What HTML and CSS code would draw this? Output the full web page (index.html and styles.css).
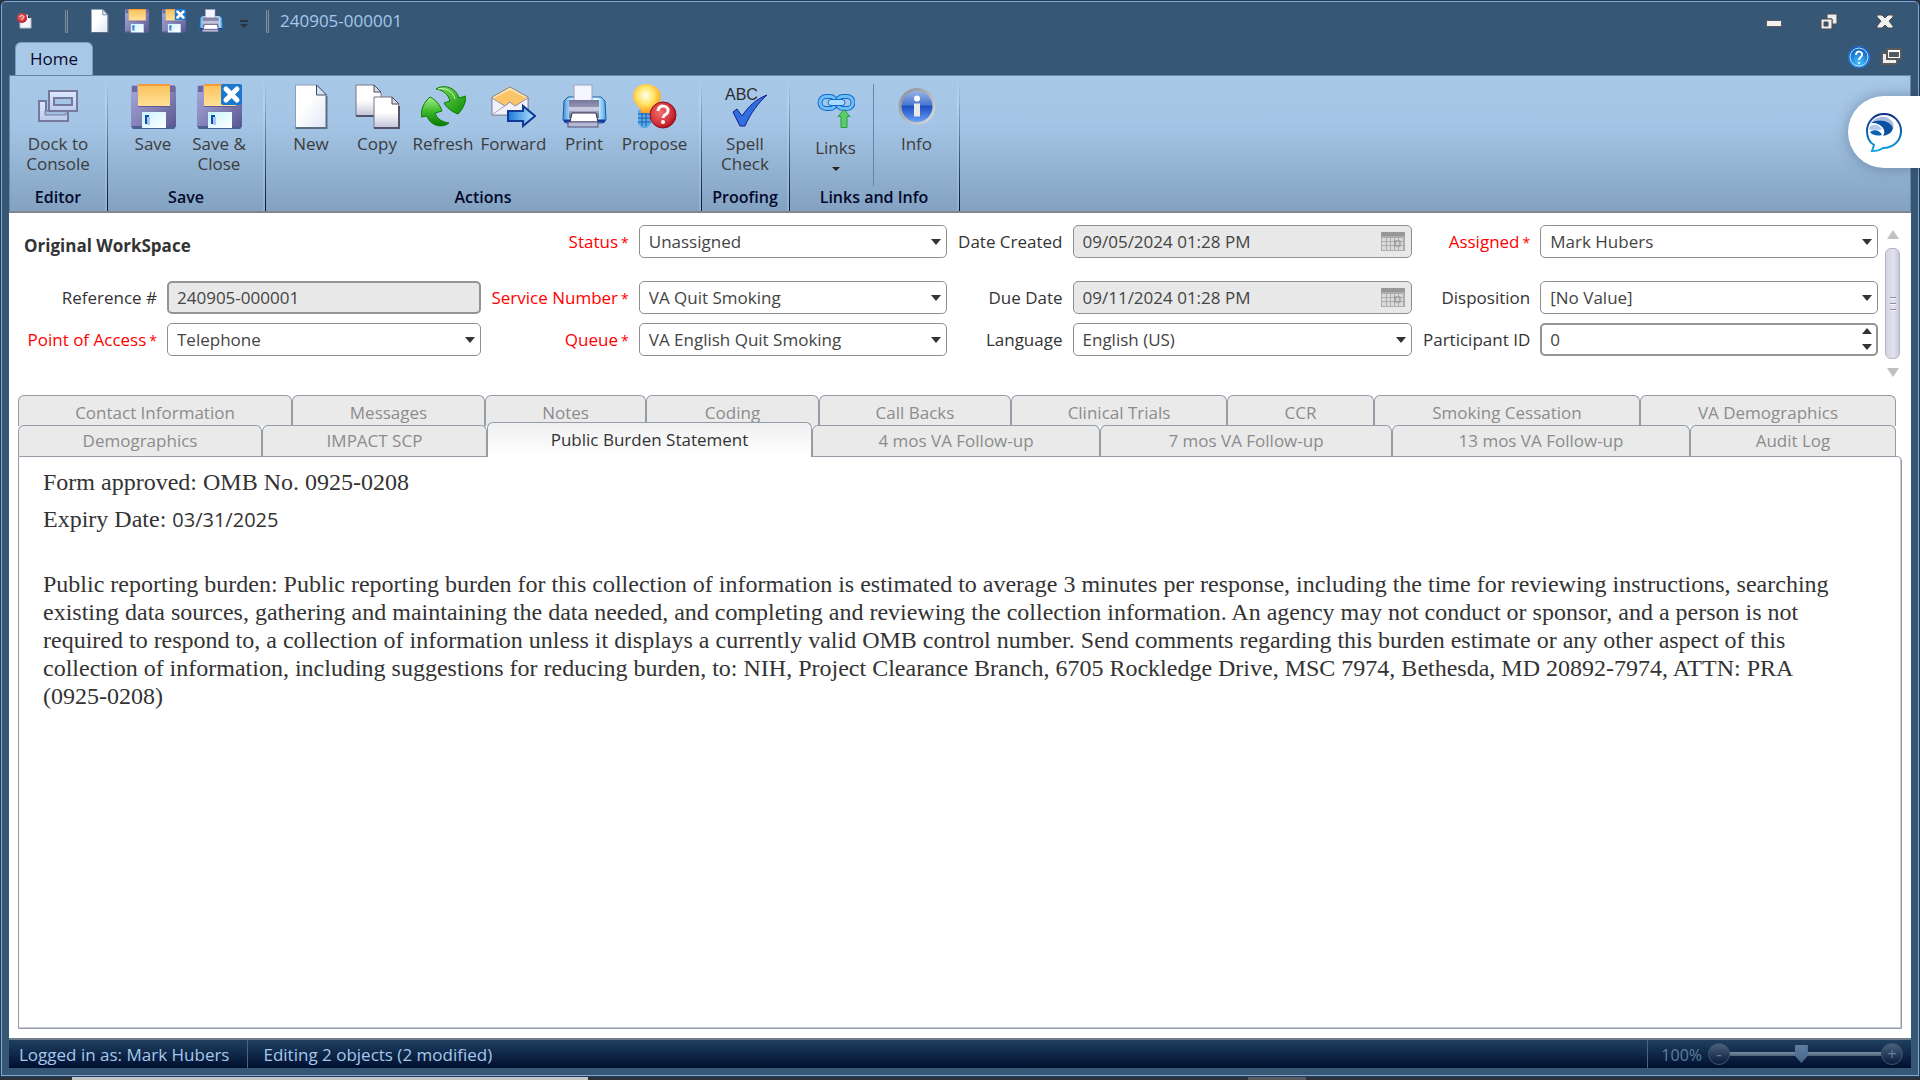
FILE: index.html
```html
<!DOCTYPE html>
<html lang="en">
<head>
    <meta charset="UTF-8">
    <meta name="viewport" content="width=device-width, initial-scale=1.0">
    <title>240905-000001</title>
    <link rel="stylesheet" href="styles.css">
</head>
<body>
    <!-- Icon definitions -->
    <svg class="sprite" width="0" height="0" aria-hidden="true">
        <defs>
            <linearGradient id="g-disk" x1="0" y1="0" x2="1" y2="1"><stop offset="0" stop-color="#a9a9dc"/><stop offset="0.5" stop-color="#8583b8"/><stop offset="1" stop-color="#57558f"/></linearGradient>
            <linearGradient id="g-label" x1="0" y1="0" x2="0" y2="1"><stop offset="0" stop-color="#fbc35c"/><stop offset="1" stop-color="#ffe09a"/></linearGradient>
            <linearGradient id="g-shutter" x1="0" y1="0" x2="1" y2="1"><stop offset="0" stop-color="#c9f3ff"/><stop offset="1" stop-color="#ffffff"/></linearGradient>
            <linearGradient id="g-page" x1="0" y1="0" x2="1" y2="1"><stop offset="0.4" stop-color="#ffffff"/><stop offset="1" stop-color="#dfe6f5"/></linearGradient>
            <linearGradient id="g-copy" x1="0" y1="0" x2="0" y2="1"><stop offset="0.5" stop-color="#ffffff"/><stop offset="1" stop-color="#c3c3dc"/></linearGradient>
            <linearGradient id="g-green1" x1="0" y1="0" x2="1" y2="1"><stop offset="0" stop-color="#7be060"/><stop offset="1" stop-color="#0a8a00"/></linearGradient>
            <linearGradient id="g-green2" x1="0" y1="0" x2="0" y2="1"><stop offset="0" stop-color="#a5f08a"/><stop offset="0.5" stop-color="#3cba2a"/><stop offset="1" stop-color="#067a00"/></linearGradient>
            <linearGradient id="g-arrow" x1="0" y1="0" x2="1" y2="0"><stop offset="0" stop-color="#1d78d8"/><stop offset="1" stop-color="#b5e4ff"/></linearGradient>
            <linearGradient id="g-printer" x1="0" y1="0" x2="1" y2="0"><stop offset="0" stop-color="#3f8fdc"/><stop offset="0.2" stop-color="#c8f0ff"/><stop offset="0.8" stop-color="#d8f6ff"/><stop offset="1" stop-color="#4aa3e8"/></linearGradient>
            <linearGradient id="g-grey" x1="0" y1="0" x2="0" y2="1"><stop offset="0" stop-color="#77779c"/><stop offset="0.6" stop-color="#a5a5c4"/><stop offset="1" stop-color="#6a6a92"/></linearGradient>
            <radialGradient id="g-bulb" cx="0.45" cy="0.4" r="0.6"><stop offset="0" stop-color="#fffff0"/><stop offset="0.5" stop-color="#ffe566"/><stop offset="1" stop-color="#ff9d1c"/></radialGradient>
            <radialGradient id="g-red" cx="0.4" cy="0.4" r="0.65"><stop offset="0" stop-color="#f07070"/><stop offset="0.7" stop-color="#d23038"/><stop offset="1" stop-color="#a5101c"/></radialGradient>
            <linearGradient id="g-info" x1="0" y1="0" x2="0" y2="1"><stop offset="0" stop-color="#9db9e8"/><stop offset="0.45" stop-color="#4a78d0"/><stop offset="0.5" stop-color="#1c4fc0"/><stop offset="1" stop-color="#6fa8ff"/></linearGradient>
            <linearGradient id="g-silver" x1="0" y1="0" x2="1" y2="1"><stop offset="0" stop-color="#8a8f98"/><stop offset="1" stop-color="#d8dce2"/></linearGradient>
            <radialGradient id="g-help" cx="0.5" cy="0.75" r="0.75"><stop offset="0" stop-color="#4cc0ff"/><stop offset="0.7" stop-color="#1270cc"/><stop offset="1" stop-color="#0a4fa8"/></radialGradient>
            <linearGradient id="g-chat" x1="0" y1="0" x2="0" y2="1"><stop offset="0" stop-color="#12308c"/><stop offset="0.5" stop-color="#0a62b0"/><stop offset="1" stop-color="#10a6e0"/></linearGradient>
            <linearGradient id="g-dock" x1="0" y1="0" x2="0" y2="1"><stop offset="0" stop-color="#dce9ff"/><stop offset="1" stop-color="#b9cbed"/></linearGradient>
        </defs>

        <symbol id="i-disk" viewBox="0 0 45 45">
            <path d="M1 1h42l2 2v39l-2 3H2l-2-3V2z" fill="url(#g-disk)"/>
            <path d="M0 42h45l-2 3H2z" fill="#4b5f94"/>
            <rect x="1" y="2" width="5" height="6" fill="#6b6aa0"/>
            <rect x="39" y="2" width="5" height="6" fill="#6b6aa0"/>
            <rect x="7" y="1" width="32" height="21" fill="url(#g-label)"/>
            <rect x="7" y="0" width="32" height="2" fill="#f79a3a"/>
            <rect x="7" y="22" width="32" height="1" fill="#5d5b93"/>
            <rect x="11" y="28" width="24" height="16" fill="url(#g-shutter)"/>
            <rect x="14" y="31" width="4" height="9" fill="#0b4fb4"/>
            <rect x="16" y="33" width="3" height="8" fill="#a9c8ee"/>
        </symbol>

        <symbol id="i-disk-close" viewBox="0 0 45 45">
            <use href="#i-disk" width="45" height="45"/>
            <rect x="24" y="0" width="21" height="21" rx="2" fill="#1a78cf"/>
            <path d="M29 5L40 16M40 5L29 16" stroke="#ffffff" stroke-width="5" stroke-linecap="round"/>
        </symbol>

        <symbol id="i-page" viewBox="0 0 34 45">
            <path d="M1 1h22l9 10v33H1z" fill="url(#g-page)" stroke="#8d9db5" stroke-width="1"/>
            <path d="M32 12v32H1" fill="none" stroke="#5c6f80" stroke-width="2"/>
            <path d="M22 1v10h10z" fill="#d5e2f7" stroke="#3b4a63" stroke-width="1"/>
        </symbol>

        <symbol id="i-copy" viewBox="0 0 45 45">
            <path d="M1 1h18l7 8v23H1z" fill="url(#g-copy)" stroke="#77757f"/>
            <path d="M1 32h25" stroke="#55526b" stroke-width="2"/>
            <path d="M19 1v7h7z" fill="#dcdce6" stroke="#4a4858"/>
            <path d="M19 13h18l7 8v23H19z" fill="url(#g-copy)" stroke="#77757f"/>
            <path d="M44 22v22H19" fill="none" stroke="#55526b" stroke-width="2"/>
            <path d="M37 13v7h7z" fill="#dcdce6" stroke="#4a4858"/>
        </symbol>

        <symbol id="i-refresh" viewBox="0 0 45 45">
            <path d="M15 5C22 0 35 3 38 14L45 12C45 18 42 25 37 30C31 28 25 23 23 19L29 17C27 10 22 6 15 5z" fill="url(#g-green1)" stroke="#0c7a06" stroke-width="1"/>
            <path d="M17 5C24 3 32 7 34 15" fill="none" stroke="#c4f7b4" stroke-width="1"/>
            <path d="M9 13C15 16 19 21 21 27L14 29C16 35 21 38 28 39C22 44 10 43 6 32L0 33C0 25 3 18 9 13z" fill="url(#g-green2)" stroke="#0c7a06" stroke-width="1"/>
        </symbol>

        <symbol id="i-forward" viewBox="0 0 45 45">
            <path d="M1 13L19 3L37 13V31H1z" fill="#fbe3b5" stroke="#8d8377"/>
            <path d="M3 14L19 6L35 14L26 21L12 21z" fill="#fbc467"/>
            <path d="M1 14L14 22L19 18L24 22L37 14V31H1z" fill="#f1f1fa" stroke="#8a8aa6"/>
            <path d="M2 30L15 21" stroke="#a3a3bd"/>
            <path d="M17 27h15v-5l12 10l-12 10v-5H17z" fill="url(#g-arrow)" stroke="#103a94" stroke-width="2"/>
        </symbol>

        <symbol id="i-print" viewBox="0 0 45 45">
            <path d="M6 13h33l4 4l1 19l-3 3H4l-3-3l1-19z" fill="url(#g-printer)" stroke="#1d5aa8"/>
            <path d="M2 37h41" stroke="#163a9c" stroke-width="3"/>
            <rect x="12" y="1" width="18" height="17" fill="#f5f5ff" stroke="#a2a2c0"/>
            <rect x="7" y="16" width="30" height="18" fill="url(#g-grey)"/>
            <rect x="7" y="23" width="30" height="4" fill="#c9c9de"/>
            <path d="M10 29h24l2 9H8z" fill="#ffffff" stroke="#2e2e52"/>
            <rect x="6" y="38" width="30" height="5" fill="#b8b8d6" stroke="#54547e"/>
        </symbol>

        <symbol id="i-propose" viewBox="0 0 45 45">
            <path d="M6 26h13v14l-4 4h-5l-4-4z" fill="#5da9e8"/>
            <path d="M6 30h13M6 34h13M6 38h13M10 28v14M14 28v14" stroke="#1460b0" stroke-width="1"/>
            <path d="M14 0C22 0 29 5 29 13C29 20 21 22 20 29H9C9 22 1 20 1 13C1 5 7 0 14 0z" fill="url(#g-bulb)"/>
            <circle cx="31" cy="31" r="13" fill="url(#g-red)" stroke="#8e0e18"/>
            <path d="M26 27C26 20 37 21 36 27C36 31 31 30 31 34" fill="none" stroke="#ffffff" stroke-width="3"/>
            <circle cx="31" cy="38" r="2" fill="#ffffff"/>
        </symbol>

        <symbol id="i-links" viewBox="0 0 38 38">
            <rect x="3" y="5" width="16" height="12" rx="6" fill="none" stroke="#1568c8" stroke-width="5"/>
            <rect x="3" y="5" width="16" height="12" rx="6" fill="none" stroke="#6cc0fa" stroke-width="3"/>
            <rect x="20" y="5" width="16" height="12" rx="6" fill="none" stroke="#1568c8" stroke-width="5"/>
            <rect x="20" y="5" width="16" height="12" rx="6" fill="none" stroke="#6cc0fa" stroke-width="3"/>
            <rect x="11" y="8" width="17" height="6" rx="3" fill="#a8dcff" stroke="#1568c8"/>
            <path d="M27 18l6 7h-3v11h-6V25h-3z" fill="#5ccb6c" stroke="#2c9c44"/>
        </symbol>

        <symbol id="i-info" viewBox="0 0 38 38">
            <circle cx="19" cy="19" r="17" fill="url(#g-info)" stroke="url(#g-silver)" stroke-width="3"/>
            <circle cx="19" cy="11" r="3" fill="#ffffff"/>
            <path d="M16 16h6v13h-6z" fill="#e8e8e8"/>
        </symbol>

        <symbol id="i-dock" viewBox="0 0 40 33">
            <path d="M1 11h7v10h22v10H1z" fill="url(#g-dock)" stroke="#76789c" stroke-width="2"/>
            <path d="M7 21h21v4H7z" fill="#a3bde0" stroke="#76789c" stroke-width="1"/>
            <path d="M11 1h28v20H11zM16 8v7h18v-7z" fill="url(#g-dock)" fill-rule="evenodd" stroke="#76789c" stroke-width="2"/>
        </symbol>

        <symbol id="i-app" viewBox="0 0 16 16">
            <path d="M4 2h8l3 3v10H4z" fill="#f3f3fb" stroke="#b9b9cc"/>
            <path d="M12 2v3h3z" fill="#1e1e28"/>
            <circle cx="6" cy="5" r="5" fill="url(#g-red)"/>
            <path d="M4 4C4 2 8 2 8 4C8 5 6 5 6 7" fill="none" stroke="#ffffff"/>
        </symbol>

        <symbol id="i-restore" viewBox="0 0 18 17">
            <path d="M7 1h10v10H12V6H7z" fill="#ededed" stroke="#4a4a4a"/>
            <path d="M1 6h11v10H1zM4 9v4h4V9z" fill="#ededed" fill-rule="evenodd" stroke="#4a4a4a"/>
        </symbol>

        <symbol id="i-close" viewBox="0 0 18 15">
            <path d="M1 1h5l3 3l3-3h5v2l-4 4l4 5v2h-5l-3-3l-3 3H1v-2l4-5l-4-4z" fill="#f0f0f0" stroke="#4a4a4a"/>
        </symbol>

        <symbol id="i-help" viewBox="0 0 24 24">
            <circle cx="12" cy="12" r="11" fill="url(#g-help)" stroke="#2c6cc4"/>
            <circle cx="12" cy="12" r="9" fill="none" stroke="#bfe2ff"/>
            <path d="M9 10C9 5 16 6 15 10C15 12 12 12 12 15" fill="none" stroke="#ffffff" stroke-width="2"/>
            <circle cx="12" cy="18" r="1" fill="#ffffff"/>
        </symbol>

        <symbol id="i-undock" viewBox="0 0 21 17">
            <path d="M1 5h5v6h10v5H1z" fill="#efefef" stroke="#5a5a5a" stroke-width="2"/>
            <path d="M6 1h14v10H6zM9 5v3h8V5z" fill="#ffffff" fill-rule="evenodd" stroke="#5a5a5a" stroke-width="2"/>
        </symbol>

        <symbol id="i-calendar" viewBox="0 0 24 19">
            <rect width="24" height="19" fill="#adadad"/>
            <rect width="24" height="4" fill="#989898"/>
            <path d="M1 6h4v3H1zM6 6h3v3H6zM10 6h3v3h-3zM14 6h3v3h-3zM18 6h4v3h-4zM1 10h4v3H1zM6 10h3v3H6zM10 10h3v3h-3zM18 10h4v3h-4zM1 14h4v4H1zM6 14h3v4H6zM10 14h3v4h-3zM14 14h3v4h-3zM18 14h4v4h-4z" fill="#dadada"/>
            <rect x="14" y="9" width="5" height="5" fill="#d0d0d0" stroke="#868686"/>
        </symbol>

        <symbol id="i-chat" viewBox="0 0 36 39">
            <path d="M18 1C28 1 35 9 35 18C35 28 27 35 17 35C14 37 10 38 6 38L8 32C3 29 1 23 1 18C1 9 8 1 18 1z" fill="#ffffff" stroke="url(#g-chat)" stroke-width="2"/>
            <path d="M5 10C10 3 20 1 26 8C28 12 28 14 27 15C22 7 14 6 5 10z" fill="#a8bce0"/>
            <path d="M5 10C14 5 24 8 27 15C26 20 22 22 17 23C21 18 16 9 5 10z" fill="#0c50a4"/>
            <path d="M3 15C6 10 12 11 16 16C14 18 12 16 4 17z" fill="#b3c8ea"/>
            <path d="M4 19C8 16 14 17 16 22C12 23 7 23 4 19z" fill="#0a62b0"/>
        </symbol>
    </svg>

    <div class="window">
        <header class="titlebar">
            <svg class="app-icon"><use href="#i-app"/></svg>
            <span class="divider"></span>
            <div class="quick-access">
                <button class="icon-button" aria-label="New"><svg><use href="#i-page"/></svg></button>
                <button class="icon-button" aria-label="Save"><svg><use href="#i-disk"/></svg></button>
                <button class="icon-button" aria-label="Save and close"><svg><use href="#i-disk-close"/></svg></button>
                <button class="icon-button" aria-label="Print"><svg><use href="#i-print"/></svg></button>
            </div>
            <button class="customize" aria-label="Customize toolbar"></button>
            <span class="divider"></span>
            <span class="title">240905-000001</span>
            <div class="window-buttons">
                <button class="minimize" aria-label="Minimize"></button>
                <button aria-label="Restore"><svg width="18" height="17"><use href="#i-restore"/></svg></button>
                <button aria-label="Close"><svg width="18" height="15"><use href="#i-close"/></svg></button>
            </div>
        </header>

        <nav class="ribbon-tabs">
            <button class="ribbon-tab">Home</button>
            <div class="ribbon-tools">
                <button aria-label="Help"><svg width="24" height="24"><use href="#i-help"/></svg></button>
                <button aria-label="Undock"><svg width="21" height="17"><use href="#i-undock"/></svg></button>
            </div>
        </nav>

        <section class="ribbon">
            <div class="group group-editor">
                <div class="group-items">
                    <button class="tool"><svg class="icon-dock"><use href="#i-dock"/></svg>Dock to<br>Console</button>
                </div>
                <div class="group-name">Editor</div>
            </div>
            <div class="group group-save">
                <div class="group-items">
                    <button class="tool"><svg><use href="#i-disk"/></svg>Save</button>
                    <button class="tool"><svg><use href="#i-disk-close"/></svg>Save &amp;<br>Close</button>
                </div>
                <div class="group-name">Save</div>
            </div>
            <div class="group group-actions">
                <div class="group-items">
                    <button class="tool"><svg><use href="#i-page"/></svg>New</button>
                    <button class="tool"><svg><use href="#i-copy"/></svg>Copy</button>
                    <button class="tool"><svg><use href="#i-refresh"/></svg>Refresh</button>
                    <button class="tool wide"><svg><use href="#i-forward"/></svg>Forward</button>
                    <button class="tool"><svg><use href="#i-print"/></svg>Print</button>
                    <button class="tool wide"><svg><use href="#i-propose"/></svg>Propose</button>
                </div>
                <div class="group-name">Actions</div>
            </div>
            <div class="group group-proofing">
                <div class="group-items">
                    <button class="tool">
                        <svg viewBox="0 0 45 45">
                            <text class="abc" x="2" y="16">ABC</text>
                            <path d="M10 28L14 25L19 32C25 23 33 15 44 11C36 18 27 30 22 42H17z" fill="#2f6fe0" stroke="#141c8c"/>
                        </svg>
                        Spell<br>Check
                    </button>
                </div>
                <div class="group-name">Proofing</div>
            </div>
            <div class="group group-links">
                <div class="group-items">
                    <button class="tool wide tool-menu"><svg class="icon-small"><use href="#i-links"/></svg>Links</button>
                    <span class="item-divider"></span>
                    <button class="tool wide"><svg class="icon-small"><use href="#i-info"/></svg>Info</button>
                </div>
                <div class="group-name">Links and Info</div>
            </div>
        </section>

        <main class="workspace">
            <div class="form-area">
                <form class="form">
                    <h1>Original WorkSpace</h1>
                    <label class="required" for="status">Status<span>*</span></label>
                    <div class="select"><select id="status"><option>Unassigned</option></select></div>
                    <label for="created">Date Created</label>
                    <div class="date"><input type="text" id="created" value="09/05/2024 01:28 PM" readonly><svg><use href="#i-calendar"/></svg></div>
                    <label class="required" for="assigned">Assigned<span>*</span></label>
                    <div class="select"><select id="assigned"><option>Mark Hubers</option></select></div>

                    <label for="reference">Reference #</label>
                    <input type="text" id="reference" class="thick" value="240905-000001" readonly>
                    <label class="required" for="service">Service Number<span>*</span></label>
                    <div class="select"><select id="service"><option>VA Quit Smoking</option></select></div>
                    <label for="due">Due Date</label>
                    <div class="date"><input type="text" id="due" value="09/11/2024 01:28 PM" readonly><svg><use href="#i-calendar"/></svg></div>
                    <label for="disposition">Disposition</label>
                    <div class="select"><select id="disposition"><option>[No Value]</option></select></div>

                    <label class="required" for="access">Point of Access<span>*</span></label>
                    <div class="select"><select id="access"><option>Telephone</option></select></div>
                    <label class="required" for="queue">Queue<span>*</span></label>
                    <div class="select"><select id="queue"><option>VA English Quit Smoking</option></select></div>
                    <label for="language">Language</label>
                    <div class="select"><select id="language"><option>English (US)</option></select></div>
                    <label for="participant">Participant ID</label>
                    <div class="spinner"><input type="text" id="participant" class="thick" value="0"></div>
                </form>
                <div class="scrollbar">
                    <span class="scroll-up"></span>
                    <span class="scroll-thumb"></span>
                    <span class="scroll-down"></span>
                </div>
            </div>

            <div class="tabs" role="tablist">
                <div class="tab-row tab-row-back">
                    <button role="tab">Contact Information</button>
                    <button role="tab">Messages</button>
                    <button role="tab">Notes</button>
                    <button role="tab">Coding</button>
                    <button role="tab">Call Backs</button>
                    <button role="tab">Clinical Trials</button>
                    <button role="tab">CCR</button>
                    <button role="tab">Smoking Cessation</button>
                    <button role="tab">VA Demographics</button>
                </div>
                <div class="tab-row tab-row-front">
                    <button role="tab">Demographics</button>
                    <button role="tab">IMPACT SCP</button>
                    <button role="tab" class="active" aria-selected="true">Public Burden Statement</button>
                    <button role="tab">4 mos VA Follow-up</button>
                    <button role="tab">7 mos VA Follow-up</button>
                    <button role="tab">13 mos VA Follow-up</button>
                    <button role="tab">Audit Log</button>
                </div>
            </div>

            <article class="panel">
                <p>Form approved: OMB No. 0925-0208</p>
                <p>Expiry Date: <span class="date-text">03/31/2025</span></p>
                <p class="statement">Public reporting burden: Public reporting burden for this collection of information is estimated to average 3 minutes per response, including the time for reviewing instructions, searching existing data sources, gathering and maintaining the data needed, and completing and reviewing the collection information. An agency may not conduct or sponsor, and a person is not required to respond to, a collection of information unless it displays a currently valid OMB control number. Send comments regarding this burden estimate or any other aspect of this collection of information, including suggestions for reducing burden, to: NIH, Project Clearance Branch, 6705 Rockledge Drive, MSC 7974, Bethesda, MD 20892-7974, ATTN: PRA (0925-0208)</p>
            </article>
        </main>

        <footer class="statusbar">
            <span class="status-item">Logged in as: Mark Hubers</span>
            <span class="status-item">Editing 2 objects (2 modified)</span>
            <div class="zoom">
                <label for="zoom">100%</label>
                <button aria-label="Zoom out">-</button>
                <input type="range" id="zoom" min="0" max="100" value="47">
                <button aria-label="Zoom in">+</button>
            </div>
        </footer>
    </div>

    <div class="taskbar"></div>

    <button class="chat" aria-label="Chat"><svg width="36" height="39"><use href="#i-chat"/></svg></button>
</body>
</html>
```
FILE: styles.css
```css
* {
    box-sizing: border-box;
}

body {
    margin: 0;
    min-height: 100vh;
    display: flex;
    flex-direction: column;
    font-family: 'Open Sans', 'Noto Sans', sans-serif;
    font-size: 17px;
    line-height: 20px;
    color: #333;
    background: #2c3338;
}

button,
input,
select {
    font: inherit;
    color: inherit;
}

button {
    padding: 0;
    border: none;
    background: none;
    cursor: pointer;
}

svg {
    display: block;
}

.sprite {
    position: absolute;
}

.window {
    flex: 1;
    display: flex;
    flex-direction: column;
    padding: 1px 8px 8px;
    border: 1px solid #1d3c5e;
    border-radius: 6px 6px 0 0;
    background: #375776;
    box-shadow: inset 0 0 0 1px #86a8cc;
}

/* Title bar */
.titlebar {
    display: flex;
    align-items: center;
    height: 40px;
    padding: 0 17px 2px 7px;
}

.app-icon {
    width: 16px;
    height: 16px;
    margin-right: 33px;
}

.divider {
    width: 3px;
    height: 24px;
    border: 1px solid #7890a4;
    border-top-color: #2c455e;
    border-radius: 2px;
    background: #4c5c6a;
}

.quick-access {
    display: flex;
    gap: 13px;
    margin-left: 20px;
}

.icon-button svg {
    width: 24px;
    height: 24px;
}

.customize {
    width: 8px;
    height: 8px;
    margin: 5px 18px 0 17px;
    border-top: 2px solid #2a3440;
}

.customize::after {
    content: '';
    display: block;
    margin-top: 2px;
    border: 4px solid transparent;
    border-top-color: #2a3440;
    border-bottom: none;
}

.title {
    margin-left: 11px;
    padding-bottom: 1px;
    color: #a5c8ec;
}

.window-buttons {
    display: flex;
    gap: 38px;
    margin-left: auto;
}

.minimize {
    width: 16px;
    height: 7px;
    margin-top: 7px;
    border: 1px solid #5c5c60;
    background: #f0f0f0;
}

/* Ribbon */
.ribbon-tabs {
    display: flex;
    justify-content: space-between;
    height: 33px;
    padding: 0 9px 0 6px;
}

.ribbon-tab {
    width: 78px;
    border: 1px solid #7d9cc4;
    border-bottom: none;
    border-radius: 6px 6px 0 0;
    background: #a8c8e8;
    color: #0a0a28;
}

.ribbon-tools {
    display: flex;
    align-items: center;
    gap: 10px;
    padding-bottom: 4px;
}

.ribbon {
    display: flex;
    height: 138px;
    border: 1px solid #6c87a6;
    border-bottom: 2px solid #7f868e;
    background: linear-gradient(#a8c8e8, #a4c5e5 35%, #83a2c2);
}

.group {
    display: flex;
    flex-direction: column;
    padding: 8px 2px 0 0;
    background:
        linear-gradient(transparent 5%, #081436) right / 1px 100% no-repeat,
        linear-gradient(transparent, #b5d2ee 20%, #8fb0d0) right 1px top / 2px 100% no-repeat;
}

.group-editor {
    width: 98px;
}

.group-save {
    width: 158px;
}

.group-actions {
    width: 436px;
}

.group-proofing {
    width: 88px;
}

.group-links {
    width: 170px;
}

.group-items {
    flex: 1;
    display: flex;
    justify-content: center;
}

.group-actions .group-items,
.group-links .group-items {
    padding-left: 4px;
}

.group-name {
    height: 24px;
    font-size: 16px;
    font-weight: 600;
    text-align: center;
    color: #04082a;
}

.tool {
    display: flex;
    flex-direction: column;
    align-items: center;
    min-width: 66px;
    text-align: center;
    color: #3c3c3c;
}

.tool.wide {
    min-width: 75px;
}

.tool svg {
    width: 45px;
    height: 45px;
    margin-bottom: 5px;
}

.tool .icon-dock {
    width: 40px;
}

.tool .icon-small {
    width: 38px;
}

.tool-menu svg {
    margin-top: 4px;
}

.tool-menu::after {
    content: '';
    margin-top: 9px;
    border: 4px solid transparent;
    border-top-color: #222;
    border-bottom: none;
}

.abc {
    font-family: 'Liberation Sans', sans-serif;
    font-size: 16px;
    fill: #2e2e2e;
}

.item-divider {
    width: 1px;
    height: 102px;
    margin-right: 5px;
    background: #6685aa;
}

/* Workspace */
.workspace {
    flex: 1;
    display: flex;
    flex-direction: column;
    padding: 12px 9px 9px;
    background: #fff;
}

.form-area {
    display: flex;
    gap: 7px;
    padding-right: 2px;
}

.form {
    flex: 1;
    display: grid;
    grid-template-columns: 139px 314fr 138px 308fr 106px 340fr 108px 338fr;
    grid-template-rows: 47px 33px 33px;
    gap: 9px 10px;
    align-items: start;
}

.form h1 {
    grid-column: span 2;
    margin: 11px 6px;
    font-size: 17px;
    font-weight: 700;
    line-height: 20px;
}

.form label {
    text-align: right;
    line-height: 34px;
    white-space: nowrap;
}

.form .required {
    color: #f00;
}

.required span {
    margin-left: 3px;
    font-size: 14px;
}

.select,
.date,
.spinner {
    position: relative;
}

.form select,
.form input {
    display: block;
    width: 100%;
    height: 33px;
    padding: 0 9px;
    border: 1px solid #8e8e8e;
    border-radius: 5px;
    background: #fff;
    color: #444;
    line-height: 31px;
    appearance: none;
}

.form .thick {
    border: 2px solid #949494;
    padding: 0 8px;
}

.form input:read-only {
    background: #e8e8e8;
}

.select::after,
.spinner::before,
.spinner::after {
    content: '';
    position: absolute;
    right: 6px;
    top: 14px;
    border: 5px solid transparent;
    border-top: 6px solid #333;
    border-bottom: none;
    pointer-events: none;
}

.spinner::before {
    top: 5px;
    border-top: none;
    border-bottom: 6px solid #333;
}

.spinner::after {
    top: 21px;
}

.date svg {
    position: absolute;
    right: 7px;
    top: 7px;
    width: 24px;
    height: 19px;
}

.scrollbar {
    display: flex;
    flex-direction: column;
    align-items: center;
    gap: 9px;
    width: 15px;
    padding-top: 5px;
}

.scroll-up,
.scroll-down {
    border: 6px solid transparent;
    border-top: none;
    border-bottom: 9px solid #c0c0c4;
}

.scroll-down {
    border-bottom: none;
    border-top: 9px solid #c0c0c4;
}

.scroll-thumb {
    width: 15px;
    height: 111px;
    border: 1px solid #b4b4c8;
    border-radius: 6px;
    background:
        repeating-linear-gradient(#8c8c9c 0 1px, #f4f4fa 1px 2px, transparent 2px 6px) center / 6px 14px no-repeat,
        linear-gradient(90deg, #d4d4e4, #e2e2ec 60%, #c6c6dc);
}

/* Tabs */
.tabs {
    margin: 18px 6px 0 0;
}

.tab-row {
    display: grid;
    grid-template-rows: 100%;
    height: 31px;
    align-items: end;
}

.tab-row-back {
    grid-template-columns: 274fr 193fr 161fr 173fr 192fr 216fr 147fr 266fr 256fr;
}

.tab-row-front {
    grid-template-columns: 244fr 225fr 325fr 288fr 292fr 298fr 206fr;
    height: 30px;
}

.tab-row button {
    height: 31px;
    padding-top: 3px;
    border: 1px solid #949ca6;
    border-bottom: none;
    border-radius: 6px 6px 0 0;
    background: #eaeaea;
    color: #8c8c8c;
}

.tab-row-front button {
    padding-top: 0;
}

.tab-row .active {
    height: 35px;
    margin-bottom: -1px;
    position: relative;
    background: linear-gradient(#f0f0f2, #fff);
    color: #333;
}

.panel {
    flex: 1;
    padding: 11px 40px 0 24px;
    border: 1px solid #949ca6;
    border-radius: 0 5px 0 0;
    box-shadow: inset -1px -1px 0 #c8ccd2;
    font-family: 'Liberation Serif', serif;
    font-size: 24px;
    line-height: 28px;
}

.panel p {
    margin: 0 0 9px;
}

.panel .statement {
    margin-top: 37px;
}

.date-text {
    font-family: 'Open Sans', sans-serif;
    font-size: 20px;
    line-height: 20px;
}

/* Status bar */
.statusbar {
    display: flex;
    align-items: center;
    height: 30px;
    border-top: 2px solid #6f7d8a;
    background: linear-gradient(#1f4060, #000f30);
    color: #a5c8ec;
}

.status-item {
    padding: 1px 18px 0 10px;
    line-height: 27px;
}

.status-item + .status-item {
    padding-left: 15px;
    border-left: 1px solid #4b6480;
}

.zoom {
    display: flex;
    align-items: center;
    height: 28px;
    margin-left: auto;
    padding: 0 8px 0 13px;
    border-left: 1px solid #4b6480;
    color: #5f7f9f;
}

.zoom label {
    margin-right: 6px;
    padding-top: 2px;
    font-size: 16px;
}

.zoom button {
    width: 22px;
    height: 22px;
    border: 1px solid #3c5670;
    border-radius: 50%;
    background: linear-gradient(#4a617c, #0c1c3c);
    line-height: 18px;
}

.zoom input {
    width: 151px;
    height: 20px;
    margin: 0;
    background: linear-gradient(#7b8ea3, #4f6379) center / 100% 4px no-repeat;
    appearance: none;
}

.zoom input::-webkit-slider-thumb {
    appearance: none;
    width: 13px;
    height: 18px;
    background: linear-gradient(#5d7c9e, #46658a);
    clip-path: polygon(0 0, 100% 0, 100% 60%, 50% 100%, 0 60%);
}

.taskbar {
    height: 3px;
    background: linear-gradient(90deg, transparent 72px, #c4c8c4 72px 588px, transparent 588px 65%, #585c60 65% 68%, transparent 68%);
}

/* Chat launcher pinned to the right edge */
.chat {
    position: absolute;
    top: 96px;
    right: 0;
    width: 72px;
    height: 72px;
    padding-left: 18px;
    border-radius: 36px 0 0 36px;
    background: #fff;
    box-shadow: 0 0 14px rgba(40, 60, 90, 0.4);
}
```
